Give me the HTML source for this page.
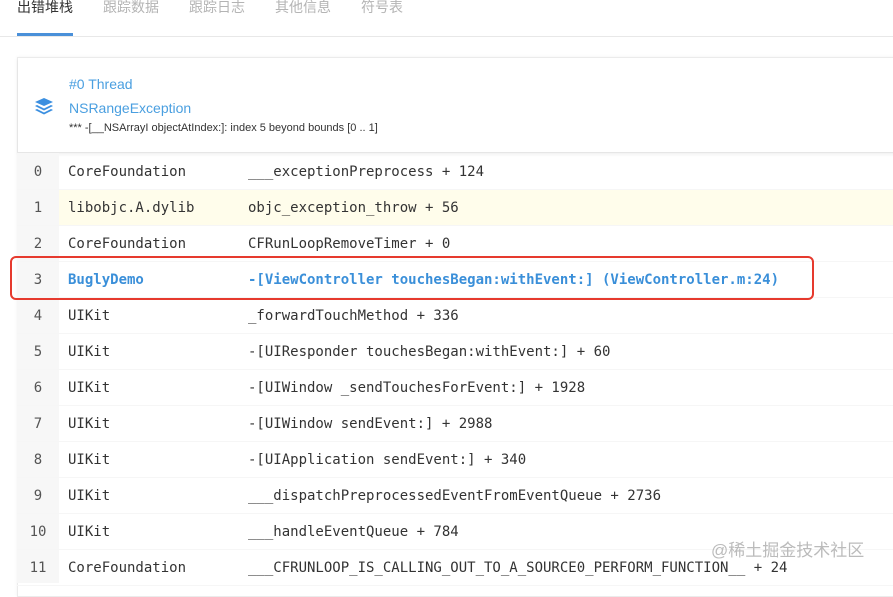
<!DOCTYPE html>
<html><head><meta charset="utf-8"><style>
*{margin:0;padding:0;box-sizing:border-box}
body{width:893px;height:578px;overflow:hidden;background:#fff;font-family:"Liberation Sans","Noto Sans CJK SC",sans-serif;position:relative}
.tabs{position:absolute;left:0;top:0;width:893px;height:37px;border-bottom:1px solid #e8e8e8}
.tab{position:absolute;top:-3px;font-size:14px;color:#b4b4b4;line-height:20px}
.tab.on{color:#333}
.ul{position:absolute;left:17px;top:33px;width:56px;height:3px;background:#4a90d9}
.card{position:absolute;left:17px;top:57px;width:890px;height:540px;border:1px solid #ebebeb;box-shadow:0 0 3px rgba(0,0,0,.06)}
.hdr{position:absolute;left:0;top:0;width:100%;height:95px;border-bottom:1px solid #e6e6e6;box-shadow:0 2px 3px rgba(0,0,0,.05);background:#fff}
.t1{position:absolute;left:51px;top:18px;font-size:14px;color:#4a9fe0}
.t2{position:absolute;left:51px;top:42px;font-size:14px;color:#4a9fe0}
.t3{position:absolute;left:51px;top:64px;font-size:11px;color:#333}
.icon{position:absolute;left:16px;top:38px}
.numcol{position:absolute;left:17px;top:153px;width:42px;height:430px;background:#f7f7f7}
.row{position:absolute;left:17px;width:880px;height:36px;font-family:"DejaVu Sans Mono","Liberation Mono",monospace;font-size:14px;color:#333;line-height:36px;border-bottom:1px solid #f6f6f6}
.row .n{position:absolute;left:0;width:42px;text-align:center;color:#555}
.row .a{position:absolute;left:51px}
.row .b{position:absolute;left:231px;white-space:pre}
.row.y{background:linear-gradient(to right,#f7f7f7 42px,#fffdeb 42px)}
.row.h .a,.row.h .b{color:#3a8fd9;font-weight:bold}
.box{position:absolute;left:10px;top:256px;width:804px;height:44px;border:2px solid #e63a2e;border-radius:6px}
.wm{position:absolute;left:711px;top:536px;font-size:17px;color:#bbb}
</style></head><body>
<div class="tabs">
<div class="tab on" style="left:17px">出错堆栈</div>
<div class="tab" style="left:103px">跟踪数据</div>
<div class="tab" style="left:189px">跟踪日志</div>
<div class="tab" style="left:275px">其他信息</div>
<div class="tab" style="left:361px">符号表</div>
<div class="ul"></div>
</div>
<div class="card"><div class="hdr">
<svg class="icon" width="20" height="20" viewBox="0 0 20 20"><path d="M10 2L19 6 10 10 1 6Z" fill="#3b8fe0"/><path d="M3 9L10 12.5 17 9 19 10 10 14.5 1 10Z" fill="#3b8fe0"/><path d="M3 13L10 16.5 17 13 19 14 10 18.5 1 14Z" fill="#3b8fe0"/></svg>
<div class="t1">#0 Thread</div><div class="t2">NSRangeException</div>
<div class="t3">*** -[__NSArrayI objectAtIndex:]: index 5 beyond bounds [0 .. 1]</div>
</div></div>
<div class="numcol"></div>
<div class="row" style="top:154px"><span class="n">0</span><span class="a">CoreFoundation</span><span class="b">___exceptionPreprocess + 124</span></div>
<div class="row y" style="top:190px"><span class="n">1</span><span class="a">libobjc.A.dylib</span><span class="b">objc_exception_throw + 56</span></div>
<div class="row" style="top:226px"><span class="n">2</span><span class="a">CoreFoundation</span><span class="b">CFRunLoopRemoveTimer + 0</span></div>
<div class="row h" style="top:262px"><span class="n">3</span><span class="a">BuglyDemo</span><span class="b">-[ViewController touchesBegan:withEvent:] (ViewController.m:24)</span></div>
<div class="row" style="top:298px"><span class="n">4</span><span class="a">UIKit</span><span class="b">_forwardTouchMethod + 336</span></div>
<div class="row" style="top:334px"><span class="n">5</span><span class="a">UIKit</span><span class="b">-[UIResponder touchesBegan:withEvent:] + 60</span></div>
<div class="row" style="top:370px"><span class="n">6</span><span class="a">UIKit</span><span class="b">-[UIWindow _sendTouchesForEvent:] + 1928</span></div>
<div class="row" style="top:406px"><span class="n">7</span><span class="a">UIKit</span><span class="b">-[UIWindow sendEvent:] + 2988</span></div>
<div class="row" style="top:442px"><span class="n">8</span><span class="a">UIKit</span><span class="b">-[UIApplication sendEvent:] + 340</span></div>
<div class="row" style="top:478px"><span class="n">9</span><span class="a">UIKit</span><span class="b">___dispatchPreprocessedEventFromEventQueue + 2736</span></div>
<div class="row" style="top:514px"><span class="n">10</span><span class="a">UIKit</span><span class="b">___handleEventQueue + 784</span></div>
<div class="row" style="top:550px"><span class="n">11</span><span class="a">CoreFoundation</span><span class="b">___CFRUNLOOP_IS_CALLING_OUT_TO_A_SOURCE0_PERFORM_FUNCTION__ + 24</span></div>
<div class="box"></div>
<div class="wm">@稀土掘金技术社区</div>
</body></html>
